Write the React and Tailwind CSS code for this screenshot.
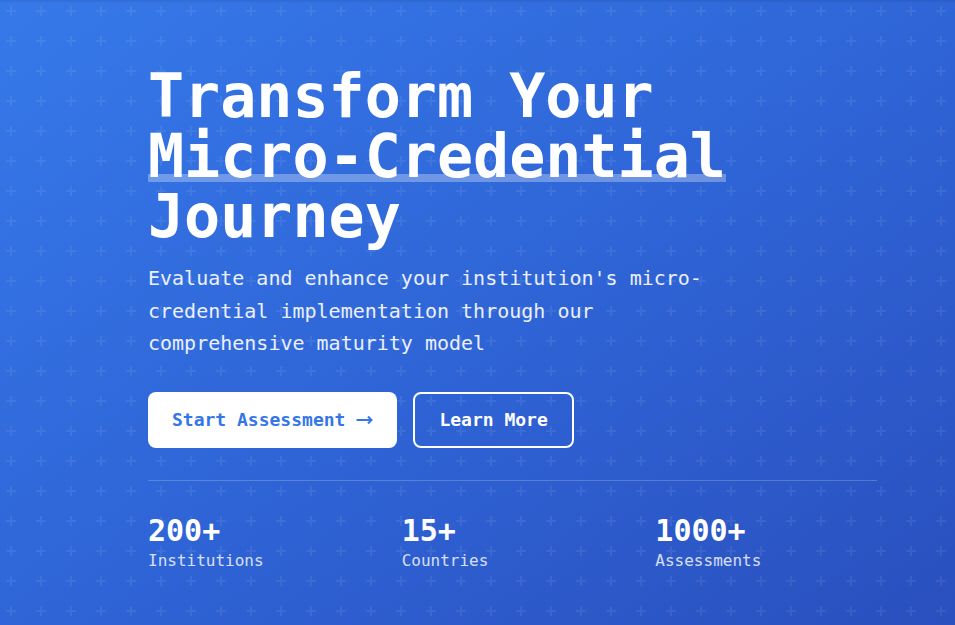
import React from "react";

const stats = [
  { value: "200+", label: "Institutions" },
  { value: "15+", label: "Countries" },
  { value: "1000+", label: "Assessments" },
];

function PlusPattern() {
  return (
    <svg className="absolute inset-0 h-full w-full pointer-events-none" aria-hidden>
      <defs>
        <pattern id="plus" width="30" height="30" patternUnits="userSpaceOnUse">
          <path d="M11 6v10M6 11h10" stroke="white" strokeWidth="2" strokeOpacity="0.07" />
        </pattern>
      </defs>
      <rect width="100%" height="100%" fill="url(#plus)" />
    </svg>
  );
}

function Arrow() {
  return (
    <svg width="17" height="10" viewBox="0 0 17 10" fill="none" aria-hidden>
      <path d="M0.5 5h15M12 1.5l3.5 3.5-3.5 3.5" stroke="currentColor" strokeWidth="2" />
    </svg>
  );
}

export default function App() {
  return (
    <div className="relative min-h-screen overflow-hidden bg-gradient-to-br from-[#3679e9] via-[#2f65d7] to-[#2a4fbe] text-white font-['DejaVu_Sans_Mono','Liberation_Mono',monospace]">
      <PlusPattern />
      <div className="absolute inset-x-0 top-0 h-[3px] bg-gradient-to-b from-black/10 to-transparent" aria-hidden />

      <section className="relative pl-[148px] pr-[78px] pt-[66px] pb-[53px]">
        <h1 className="text-6xl leading-none font-bold">
          <span className="block">Transform Your</span>
          <span className="relative inline-block">
            <span className="absolute left-0 right-0 bottom-[4px] h-2 bg-white/30" aria-hidden />
            <span className="relative">Micro-Credential</span>
          </span>
          <span className="block">Journey</span>
        </h1>

        <p className="mt-4 max-w-xl text-xl leading-relaxed text-white/90">
          Evaluate and enhance your institution's micro-credential implementation through our
          comprehensive maturity model
        </p>

        <div className="mt-8 flex gap-4">
          <button className="flex h-14 items-center gap-[11px] rounded-lg bg-white px-6 text-lg font-bold text-[#3576e8]">
            Start Assessment
            <Arrow />
          </button>
          <button className="h-14 rounded-lg border-2 border-white px-6 text-lg font-bold text-white">
            Learn More
          </button>
        </div>

        <div className="mt-8 grid grid-cols-3 gap-8 border-t border-white/20 pt-8">
          {stats.map((s) => (
            <div key={s.label}>
              <div className="text-3xl font-bold">{s.value}</div>
              <div className="text-base text-white/80">{s.label}</div>
            </div>
          ))}
        </div>
      </section>
    </div>
  );
}
